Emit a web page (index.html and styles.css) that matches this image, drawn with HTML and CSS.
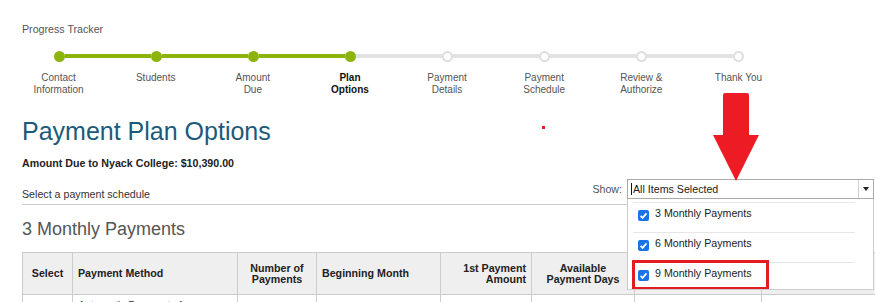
FILE: index.html
```html
<!DOCTYPE html>
<html lang="en">

<head>
    <meta charset="UTF-8">
    <meta name="viewport" content="width=device-width, initial-scale=1.0">
    <title>Payment Plan Options</title>
    <link rel="stylesheet" href="styles.css">
</head>

<body>
    <div class="page">
        <div class="tracker">
            <div class="tracker-title">Progress Tracker</div>
            <div class="track">
                <span class="dot done"></span><span class="bar done"></span>
                <span class="dot done"></span><span class="bar done"></span>
                <span class="dot done"></span><span class="bar done"></span>
                <span class="dot done"></span><span class="bar"></span>
                <span class="dot"></span><span class="bar"></span>
                <span class="dot"></span><span class="bar"></span>
                <span class="dot"></span><span class="bar"></span>
                <span class="dot"></span>
            </div>
            <ul class="steps">
                <li>Contact<br>Information</li>
                <li>Students</li>
                <li>Amount<br>Due</li>
                <li class="current">Plan<br>Options</li>
                <li>Payment<br>Details</li>
                <li>Payment<br>Schedule</li>
                <li>Review &amp;<br>Authorize</li>
                <li>Thank You</li>
            </ul>
        </div>

        <h1 class="title">Payment Plan Options</h1>
        <p class="amount">Amount Due to Nyack College: $10,390.00</p>

        <div class="schedule-bar">
            <span class="hint">Select a payment schedule</span>
            <div class="show">
                <label>Show:</label>
                <div class="multiselect">
                    <div class="ms-box">
                        <span class="cursor"></span>
                        <span class="ms-text">All Items Selected</span>
                        <span class="ms-btn"><span class="tri"></span></span>
                    </div>
                    <ul class="ms-list">
                        <li><span class="check"><svg width="11" height="11" viewBox="0 0 11 11"><path d="M2.6 5.9 L4.6 7.9 L8.5 3.4" fill="none" stroke="#fff" stroke-width="1.7"/></svg></span>3 Monthly Payments</li>
                        <li><span class="check"><svg width="11" height="11" viewBox="0 0 11 11"><path d="M2.6 5.9 L4.6 7.9 L8.5 3.4" fill="none" stroke="#fff" stroke-width="1.7"/></svg></span>6 Monthly Payments</li>
                        <li><span class="check"><svg width="11" height="11" viewBox="0 0 11 11"><path d="M2.6 5.9 L4.6 7.9 L8.5 3.4" fill="none" stroke="#fff" stroke-width="1.7"/></svg></span>9 Monthly Payments<span class="callout"></span></li>
                    </ul>
                </div>
            </div>
        </div>

        <h2 class="plan-title">3 Monthly Payments</h2>
        <table class="plans">
            <colgroup>
                <col class="w-select">
                <col class="w-method">
                <col class="w-number">
                <col class="w-month">
                <col class="w-amount">
                <col class="w-days">
                <col class="w-wide">
                <col class="w-wide">
            </colgroup>
            <tr>
                <th class="c">Select</th>
                <th>Payment Method</th>
                <th class="c">Number of<br>Payments</th>
                <th>Beginning Month</th>
                <th class="r">1st Payment<br>Amount</th>
                <th class="c">Available<br>Payment Days</th>
                <th class="c">Payment<br>Dates</th>
                <th class="c">Fee</th>
            </tr>
            <tr>
                <td></td>
                <td>Automatic Payments from<br>Checking or Savings</td>
                <td></td>
                <td></td>
                <td></td>
                <td></td>
                <td></td>
                <td></td>
            </tr>
        </table>
    </div>

    <span class="marker"></span>
    <svg class="callout-arrow" width="48" height="88" viewBox="0 0 48 88">
        <path d="M11 2 Q11 0 13 0 H35 Q37 0 37 2 V42 H47 L24 88 L1 42 H11 Z" fill="#ed1c24"/>
    </svg>
</body>

</html>
```

FILE: styles.css
```css
* {
    margin: 0;
    padding: 0;
    box-sizing: border-box;
}

html,
body {
    overflow: hidden;
}

body {
    font-family: "Liberation Sans", Arial, sans-serif;
    font-size: 8pt;
    color: #333;
    background: #fff;
}

.page {
    padding: 0 1px 0 22px;
}

/* progress tracker */
.tracker {
    padding-top: 22px;
}

.tracker-title {
    line-height: 14px;
    color: #555;
}

.track {
    display: flex;
    align-items: center;
    width: 691px;
    height: 11px;
    margin: 14.5px 0 0 31.5px;
}

.dot {
    flex: none;
    width: 11px;
    height: 11px;
    border-radius: 50%;
    background: #fff;
    border: 2px solid #dedede;
}

.dot.done {
    background: #8cb40d;
    border-color: #8cb40d;
}

.bar {
    flex: 1;
    height: 4px;
    background: #e2e2e2;
}

.bar.done {
    background: #8cb40d;
}

.steps {
    display: grid;
    grid-template-columns: repeat(8, 1fr);
    width: 777px;
    margin: 10.5px 0 0 -12px;
    list-style: none;
}

.steps li {
    text-align: center;
    font-size: 10px;
    line-height: 12px;
    color: #555;
}

.steps .current {
    font-weight: bold;
    color: #111;
}

/* heading */
.title {
    margin-top: 20px;
    font-size: 25px;
    line-height: 30px;
    font-weight: normal;
    color: #1d5a7a;
}

.amount {
    margin-top: 10px;
    line-height: 14px;
    font-weight: bold;
    color: #222;
}

.schedule-bar {
    display: flex;
    justify-content: space-between;
    align-items: flex-end;
    margin-top: 9px;
    padding-bottom: 3px;
    border-bottom: 1px solid #ccc;
}

.hint {
    line-height: 14px;
    color: #333;
}

.show {
    display: flex;
    align-items: center;
    margin-bottom: 2px;
}

.show label {
    margin-right: 5px;
    color: #555;
}

/* multi select */
.multiselect {
    position: relative;
    width: 247px;
}

.ms-box {
    display: flex;
    align-items: center;
    height: 20px;
    padding-left: 3px;
    border: 1px solid #aaa;
    background: #fff;
    color: #222;
}

.cursor {
    width: 1px;
    height: 12px;
    margin-right: 1px;
    background: #111;
}

.ms-text {
    flex: 1;
}

.ms-btn {
    display: flex;
    align-items: center;
    justify-content: center;
    align-self: stretch;
    width: 15px;
    border-left: 1px solid #d0d0d0;
}

.tri {
    border-top: 4px solid #222;
    border-left: 3.5px solid transparent;
    border-right: 3.5px solid transparent;
}

.ms-list {
    position: absolute;
    left: 0;
    right: 0;
    top: 100%;
    z-index: 5;
    height: 91px;
    padding: 3px 18px 0 5px;
    border: 1px solid #ccc;
    border-top: 0;
    background: #fff;
    list-style: none;
    overflow: hidden;
}

.ms-list li {
    position: relative;
    display: flex;
    align-items: center;
    height: 30px;
    padding: 3px 0 12px 5px;
    border-top: 1px solid #e6e6e6;
    line-height: 14px;
    color: #222;
}

.check {
    display: flex;
    flex: none;
    width: 11px;
    height: 11px;
    margin-right: 6px;
    border-radius: 2px;
    background: #1a73e8;
    transform: translateY(2px);
}

.callout {
    position: absolute;
    left: -1px;
    top: -3px;
    width: 137px;
    height: 30px;
    border: 3px solid #e31b23;
}

/* plan table */
.plan-title {
    margin-top: 13px;
    font-size: 18px;
    line-height: 22px;
    font-weight: normal;
    color: #555;
}

.plans {
    width: 866px;
    margin-top: 12px;
    border-collapse: collapse;
    table-layout: fixed;
}

.w-select { width: 50px; }
.w-method { width: 165px; }
.w-number { width: 79px; }
.w-month { width: 124px; }
.w-amount { width: 91px; }
.w-days { width: 103px; }
.w-wide { width: 127px; }

.plans th {
    height: 42px;
    padding: 0 5px;
    border: 1px solid #ccc;
    background: #efefef;
    font-weight: bold;
    line-height: 11px;
    text-align: left;
    color: #222;
}

.plans td {
    height: 40px;
    padding: 4px 5px;
    border: 1px solid #ccc;
    line-height: 12px;
    vertical-align: top;
    color: #333;
}

.plans .c {
    text-align: center;
}

.plans .r {
    text-align: right;
}

/* annotations */
.marker {
    position: absolute;
    left: 542px;
    top: 126px;
    width: 3px;
    height: 3px;
    background: #e31b23;
}

.callout-arrow {
    position: absolute;
    left: 712px;
    top: 93px;
}
```
